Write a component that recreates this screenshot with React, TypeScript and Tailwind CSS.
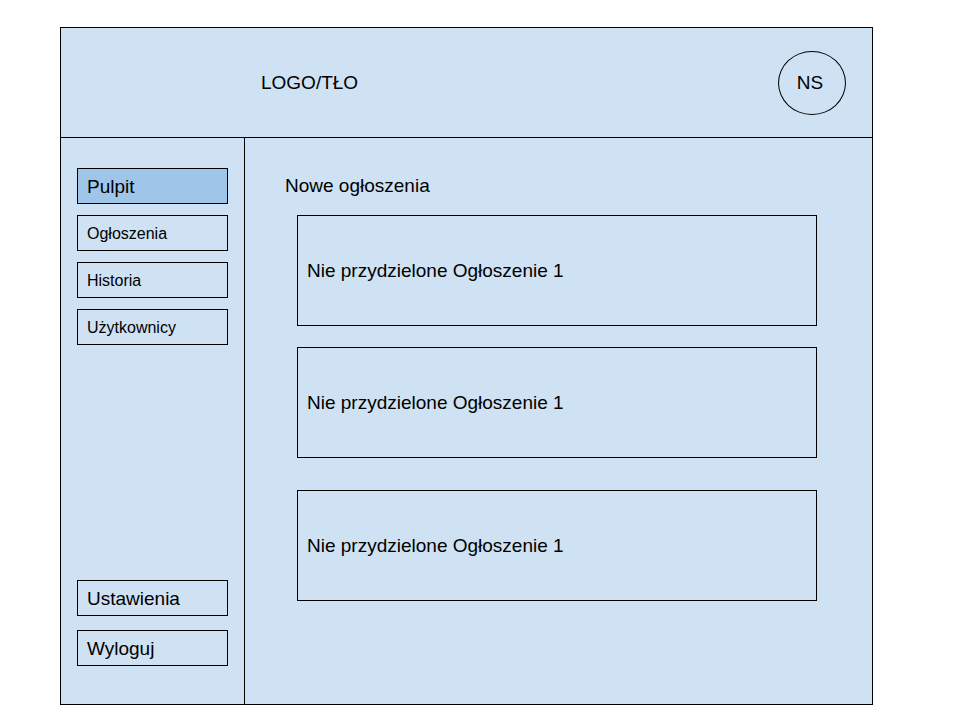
import React from "react";

type NavItem = { label: string; active?: boolean; large?: boolean };

const mainNav: NavItem[] = [
  { label: "Pulpit", active: true, large: true },
  { label: "Ogłoszenia" },
  { label: "Historia" },
  { label: "Użytkownicy" },
];

const accountNav: NavItem[] = [
  { label: "Ustawienia", large: true },
  { label: "Wyloguj", large: true },
];

function NavButton({ label, active, large }: NavItem) {
  return (
    <button
      type="button"
      aria-current={active ? "page" : undefined}
      className={`flex h-9 w-full items-center border border-black px-[9px] pt-0.5 text-left leading-6 ${
        large ? "text-[19px]" : "text-[16px]"
      } ${active ? "bg-[#9fc5e8]" : "bg-[#cfe2f3]"}`}
    >
      {label}
    </button>
  );
}

function Announcement({ title }: { title: string }) {
  return (
    <article className="flex min-h-[111px] items-center border border-black px-[9px]">
      <h2>{title}</h2>
    </article>
  );
}

export default function App() {
  return (
    <div className="flex min-h-screen flex-col bg-white pt-[27px] pr-[87px] pb-[15px] pl-[60px] font-['Liberation_Sans',Arial,sans-serif] text-[19px] leading-6 text-black">
      <div className="flex grow flex-col border border-black bg-[#cfe2f3]">
        <header className="flex items-center justify-between border-b border-black pt-[23px] pr-[26px] pb-[22px] pl-[200px]">
          <div>LOGO/TŁO</div>
          <button
            type="button"
            className="flex h-16 w-[68px] items-center justify-center rounded-[50%] border border-black pr-1"
          >
            NS
          </button>
        </header>

        <div className="flex grow">
          <nav className="flex w-[184px] shrink-0 flex-col justify-between border-r border-black px-4 pt-[30px] pb-[38px]">
            <div className="flex flex-col gap-[11px]">
              {mainNav.map((item) => (
                <NavButton key={item.label} {...item} />
              ))}
            </div>
            <div className="flex flex-col gap-[14px]">
              {accountNav.map((item) => (
                <NavButton key={item.label} {...item} />
              ))}
            </div>
          </nav>

          <main className="min-w-0 grow pt-9 pr-[55px] pb-8 pl-10">
            <h1>Nowe ogłoszenia</h1>
            <div className="flex flex-col gap-8 pt-[17px] pl-3">
              <div className="flex flex-col gap-[21px]">
                <Announcement title="Nie przydzielone Ogłoszenie 1" />
                <Announcement title="Nie przydzielone Ogłoszenie 1" />
              </div>
              <Announcement title="Nie przydzielone Ogłoszenie 1" />
            </div>
          </main>
        </div>
      </div>
    </div>
  );
}
